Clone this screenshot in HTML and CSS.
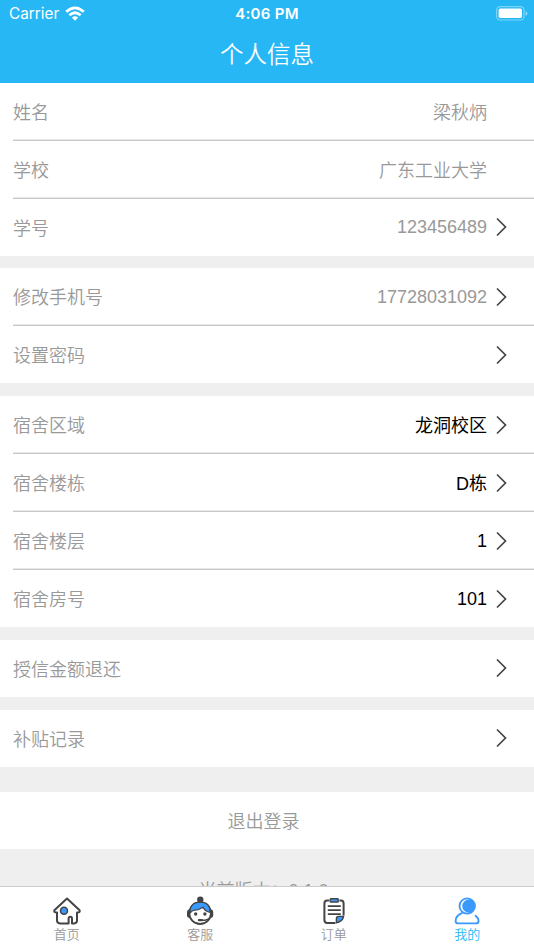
FILE: index.html
```html
<!DOCTYPE html>
<html lang="zh-CN">
<head>
    <meta charset="utf-8">
    <title>个人信息</title>
    <link rel="stylesheet" href="styles.css">
</head>

<body>
    <!-- chevron shared by all the rows -->
    <svg class="defs">
        <symbol id="arrow" viewBox="0 0 11 20">
            <path d="M1 1.5 L9.5 10 L1 18.5" fill="none" stroke="#444" stroke-width="1.7"/>
        </symbol>
    </svg>

    <!-- Header -->
    <header class="header">
        <div class="status">
            <div class="carrier">
                Carrier
                <svg class="wifi" width="20" height="16" viewBox="0 0 20 16">
                    <g fill="none" stroke="#fff" stroke-width="2.7">
                        <path d="M1.2 5.8 Q10 -2.2 18.8 5.8"/>
                        <path d="M4.4 9.3 Q10 4.2 15.6 9.3"/>
                    </g>
                    <path d="M6.8 11.5 Q10 9 13.2 11.5 L10 14.8 Z" fill="#fff"/>
                </svg>
            </div>
            <div class="time">4:06 PM</div>
            <svg class="battery" width="32" height="15" viewBox="0 0 32 15">
                <rect x="0.6" y="0.6" width="27.4" height="13.4" rx="3.6" fill="none" stroke="#fff" stroke-opacity="0.4" stroke-width="1.2"/>
                <rect x="2.6" y="2.5" width="23.4" height="9.6" rx="1.8" fill="#fff"/>
                <path d="M29.6 5 Q31.4 5.6 31.4 7.4 Q31.4 9.2 29.6 9.8 Z" fill="#fff" fill-opacity="0.5"/>
            </svg>
        </div>
        <h1 class="title">个人信息</h1>
    </header>

    <!-- Page body -->
    <main class="content">
        <section class="group">
            <div class="row"><span class="label">姓名</span><span class="value cjk">梁秋炳</span></div>
            <div class="row"><span class="label">学校</span><span class="value cjk">广东工业大学</span></div>
            <div class="row"><span class="label">学号</span><span class="value">123456489</span><svg class="arrow"><use href="#arrow"/></svg></div>
        </section>

        <section class="group">
            <div class="row"><span class="label">修改手机号</span><span class="value">17728031092</span><svg class="arrow"><use href="#arrow"/></svg></div>
            <div class="row"><span class="label">设置密码</span><span class="value"></span><svg class="arrow"><use href="#arrow"/></svg></div>
        </section>

        <section class="group">
            <div class="row"><span class="label">宿舍区域</span><span class="value dark cjk">龙洞校区</span><svg class="arrow"><use href="#arrow"/></svg></div>
            <div class="row"><span class="label">宿舍楼栋</span><span class="value dark cjk">D栋</span><svg class="arrow"><use href="#arrow"/></svg></div>
            <div class="row"><span class="label">宿舍楼层</span><span class="value dark">1</span><svg class="arrow"><use href="#arrow"/></svg></div>
            <div class="row"><span class="label">宿舍房号</span><span class="value dark">101</span><svg class="arrow"><use href="#arrow"/></svg></div>
        </section>

        <section class="group">
            <div class="row"><span class="label">授信金额退还</span><span class="value"></span><svg class="arrow"><use href="#arrow"/></svg></div>
        </section>

        <section class="group">
            <div class="row"><span class="label">补贴记录</span><span class="value"></span><svg class="arrow"><use href="#arrow"/></svg></div>
        </section>

        <div class="logout">退出登录</div>
        <div class="version">当前版本：0.1.0</div>
    </main>

    <!-- Tab bar -->
    <nav class="tabs">
        <div class="tab">
            <svg width="30" height="30" viewBox="0 0 30 30">
                <path d="M15 2.6 L27.6 14.2 Q28.4 16.8 25 16.6 V24.6 Q25 27.4 22.2 27.4 H20 V22.8 Q20 20.8 18.4 20.8 Q16.6 20.8 16.6 22.8 V27.4 H8 Q5 27.4 5 24.6 V16.6 Q1.6 16.8 2.4 14.2 Z" fill="none" stroke="#444" stroke-width="2" stroke-linejoin="round"/>
                <circle cx="12" cy="14.8" r="3.5" fill="#3b99fc" stroke="#444" stroke-width="1.5"/>
            </svg>
            <span>首页</span>
        </div>
        <div class="tab">
            <svg width="30" height="30" viewBox="0 0 30 30">
                <circle cx="15.3" cy="3.8" r="3.2" fill="#444"/>
                <rect x="2" y="13.6" width="5" height="8.4" rx="2.4" fill="#444"/>
                <rect x="23.2" y="13.6" width="5" height="8.4" rx="2.4" fill="#444"/>
                <circle cx="15.1" cy="17.2" r="10.8" fill="#fff" stroke="#444" stroke-width="1.8"/>
                <path d="M5 17 Q4.6 6.2 15.3 6.2 Q25.4 6.2 25.2 16.4 Q20.2 15.6 18 11.2 Q13 14.4 9.6 14 Q7 14.8 5 17 Z" fill="#3b99fc" stroke="#444" stroke-width="1.2"/>
                <circle cx="10.7" cy="18" r="1.7" fill="#444"/>
                <circle cx="19.9" cy="18" r="1.7" fill="#444"/>
                <path d="M25.2 21.4 Q22.4 24.6 16 24.2" fill="none" stroke="#444" stroke-width="1.5"/>
                <rect x="12.8" y="22.9" width="5.2" height="2.4" rx="1.2" fill="#444"/>
            </svg>
            <span>客服</span>
        </div>
        <div class="tab">
            <svg width="30" height="30" viewBox="0 0 30 30">
                <path d="M10 4.6 H8.2 Q5.4 4.6 5.4 7.4 V24 Q5.4 27 8.4 27 H16.4 M20.4 4.6 H22 Q24.6 4.6 24.6 7.4 V19.4" fill="none" stroke="#444" stroke-width="2"/>
                <rect x="11.2" y="2.8" width="8" height="3.2" rx="0.6" fill="#3b99fc" stroke="#444" stroke-width="1.4"/>
                <path d="M8.8 10.2 H21.8 M8.8 14.2 H21.8 M8.8 18.2 H21.8" stroke="#444" stroke-width="1.7"/>
                <path d="M17.4 26.8 V22.6 Q17.4 20.4 19.6 20.4 H24.6 Q23.8 25.4 17.4 26.8 Z" fill="#3b99fc" stroke="#444" stroke-width="1.4" stroke-linejoin="round"/>
            </svg>
            <span>订单</span>
        </div>
        <div class="tab active">
            <svg width="30" height="30" viewBox="0 0 30 30">
                <circle cx="15.2" cy="10" r="7.7" fill="#fff" stroke="#3b99fc" stroke-width="1.8"/>
                <circle cx="16.9" cy="10.2" r="6.6" fill="#3b99fc"/>
                <path d="M10 17.2 Q3.6 19.8 3.6 25 Q3.6 27.4 6.2 27.4 H24 Q26.6 27.4 26.6 25 Q26.2 21.8 23.6 19.8" fill="none" stroke="#3b99fc" stroke-width="1.9" stroke-linecap="round"/>
            </svg>
            <span>我的</span>
        </div>
    </nav>
</body>

</html>
```

FILE: styles.css
```css
* {
    box-sizing: border-box;
}
body {
    margin: 0;
    height: 950px;
    display: flex;
    flex-direction: column;
    overflow: hidden;
    background: #efefef;
    color: #999;
    font-family: "Liberation Sans", "Noto Sans CJK SC", sans-serif;
    font-size: 18px;
    font-weight: 350;
}
.defs {
    display: none;
}

/* Header */
.header {
    flex: none;
    height: 82.6px;
    background: #27b7f5;
    color: #fff;
}
.status {
    display: grid;
    grid-template-columns: 1fr auto 1fr;
    align-items: center;
    height: 27px;
    padding: 0 6px 0 9px;
    font-family: Inter, sans-serif;
    font-size: 15.3px;
    font-weight: 400;
}
.carrier {
    display: flex;
    align-items: center;
    gap: 6px;
}
.time {
    padding-right: 3px;
    font-weight: 600;
    font-size: 15px;
    letter-spacing: 0.3px;
}
.battery {
    justify-self: end;
}
.title {
    margin: 0;
    line-height: 56px;
    text-align: center;
    font-size: 23.5px;
    font-weight: 350;
}

/* Rows */
.content {
    flex: 1;
    min-height: 0;
    overflow: hidden;
}
.group {
    margin-bottom: 12.8px;
    padding-left: 13px;
    background: #fff;
}
.row {
    display: flex;
    align-items: center;
    height: 57px;
    padding-right: 27px;
}
.row + .row {
    height: 58px;
    border-top: 1px solid #c8c8c8;
    box-shadow: 0 -0.4px 0 #c8c8c8;
}
.value {
    flex: 1;
    padding: 1px 20px 0 0;
    text-align: right;
}
.label {
    padding-bottom: 1px;
}
.cjk {
    padding: 0 20px 1px 0;
}
.arrow {
    width: 11px;
    height: 20px;
    margin-left: -11px;
}
.dark {
    color: #000;
    font-weight: 400;
}

.logout {
    height: 57px;
    margin-top: 25.6px;
    padding-right: 7px;
    background: #fff;
    line-height: 60px;
    text-align: center;
}
.version {
    margin-top: 28px;
    padding-right: 7px;
    line-height: 28px;
    text-align: center;
}

/* Tab bar */
.tabs {
    flex: none;
    display: grid;
    grid-template-columns: repeat(4, 1fr);
    height: 64px;
    border-top: 1px solid #ccc;
    background: #fff;
}
.tab {
    display: flex;
    flex-direction: column;
    align-items: center;
    padding-top: 9px;
    font-size: 13px;
    line-height: 18px;
}
.active {
    color: #27b7f5;
}
```
